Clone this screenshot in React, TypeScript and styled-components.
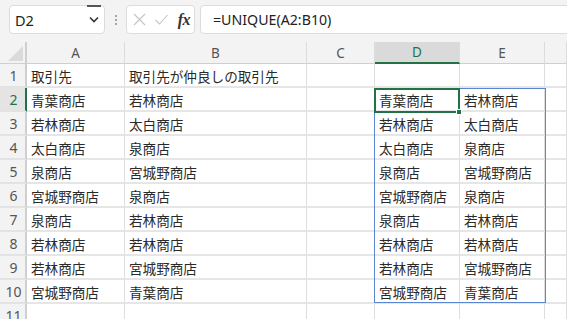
import React from "react";
import styled, { createGlobalStyle, css } from "styled-components";

const Global = createGlobalStyle`
  html, body { margin: 0; padding: 0; background: #f3f3f3; overflow: hidden; }
  body { width: 567px; height: 319px; }
  * { box-sizing: border-box; }
`;

const Page = styled.div`
  display: flex;
  flex-direction: column;
  width: 567px;
  height: 319px;
  overflow: hidden;
  background: #f3f3f3;
`;

const Toolbar = styled.div`
  display: flex;
  align-items: stretch;
  height: 42px;
  flex: none;
  padding: 5px 0 8px 9px;
`;

const Box = styled.div`
  background: #ffffff;
  border: 1px solid #dcdcdc;
  border-radius: 4px;
  display: flex;
  align-items: center;
`;

const NameBox = styled(Box)`
  position: relative;
  width: 96px;
  padding-left: 5px;
  font-family: "Noto Sans", "Liberation Sans", sans-serif;
  font-size: 14.5px;
  color: #222;
  &::after {
    content: "";
    position: absolute;
    top: -1px;
    right: 3px;
    width: 14px;
    height: 1.5px;
    background: #555;
  }
`;

const NameText = styled.span`
  flex: 1;
  padding-top: 1px;
`;

const Chevron = styled.svg`
  width: 10px;
  height: 7px;
  margin-right: 5px;
`;

const Dots = styled.div`
  width: 21px;
  display: flex;
  flex-direction: column;
  align-items: center;
  justify-content: center;
  gap: 2px;
`;

const Dot = styled.span`
  width: 2px;
  height: 2px;
  background: #8a8a8a;
  border-radius: 1px;
`;

const FxButtons = styled(Box)`
  width: 69px;
  padding: 0 4px 0 6px;
  justify-content: space-between;
`;

const IconSvg = styled.svg`
  width: 13px;
  height: 13px;
`;

const FxLabel = styled.span`
  font-family: "Liberation Serif", serif;
  font-style: italic;
  font-weight: bold;
  font-size: 16px;
  color: #333;
  letter-spacing: -0.5px;
`;

const FormulaInput = styled(Box)`
  flex: 1;
  margin-left: 5px;
  margin-right: -8px;
  padding-left: 12px;
  font-family: "Noto Sans", "Liberation Sans", sans-serif;
  font-size: 14.2px;
  color: #222;
`;

const Sheet = styled.div`
  flex: 1;
  display: grid;
  overflow: hidden;
  background: #ffffff;
`;

const gridTemplate = css`
  display: grid;
  grid-area: 1 / 1;
  grid-template-columns: 27px 98px 182px 68px 85px 85px 1fr;
  grid-template-rows: 22px repeat(11, 24px);
`;

const Grid = styled.div`
  ${gridTemplate}
`;

const Overlay = styled.div`
  ${gridTemplate}
  pointer-events: none;
  z-index: 1;
`;

const Corner = styled.div`
  background: #f3f3f3;
  border-right: 2px solid #cfcfcf;
  border-bottom: 1px solid #cfcfcf;
  display: flex;
  align-items: flex-end;
  justify-content: flex-end;
  padding: 0 2px 2px 0;
`;

const Triangle = styled.div`
  width: 0;
  height: 0;
  border-left: 15px solid transparent;
  border-bottom: 15px solid #dadada;
`;

const ColHeader = styled.div<{ $active?: boolean }>`
  background: #f3f3f3;
  border-right: 1px solid #dcdcdc;
  border-bottom: 1px solid #cfcfcf;
  display: flex;
  align-items: center;
  justify-content: center;
  font-family: "Noto Sans", "Liberation Sans", sans-serif;
  font-size: 13.5px;
  color: #555;
  ${(p) =>
    p.$active &&
    css`
      background: #dadada;
      color: #217346;
      border-bottom: 2px solid #217346;
    `}
`;

const RowHeader = styled.div<{ $active?: boolean }>`
  background: #f3f3f3;
  border-right: 2px solid #cfcfcf;
  border-bottom: 2px solid #e3e3e3;
  display: flex;
  align-items: center;
  justify-content: center;
  padding-left: 2px;
  font-family: "Noto Sans", "Liberation Sans", sans-serif;
  font-size: 14px;
  color: #555;
  ${(p) =>
    p.$active &&
    css`
      background: #e4e4e4;
      color: #217346;
      border-right: 2px solid #217346;
    `}
`;

const Cell = styled.div`
  border-right: 1px solid #dedede;
  border-bottom: 2px solid #e6e6e6;
  display: flex;
  align-items: center;
  padding: 1px 0 0 4px;
  font-family: "Noto Sans CJK JP", "Noto Sans", sans-serif;
  font-size: 13.6px;
  color: #2a2a2a;
  white-space: nowrap;
  overflow: hidden;
`;

const SpillBorder = styled.div`
  grid-column: 5 / 7;
  grid-row: 3 / 12;
  border: 1.5px solid #5b86d4;
  margin: 0 -1px 1px -1px;
`;

const Selection = styled.div`
  grid-column: 5 / 6;
  grid-row: 3 / 4;
  border: 2px solid #217346;
  margin: 0 0 -1px -1px;
  position: relative;
`;

const FillHandle = styled.span`
  position: absolute;
  right: -4px;
  bottom: -4px;
  width: 6px;
  height: 6px;
  background: #217346;
  border: 1px solid #ffffff;
`;

const columns = ["A", "B", "C", "D", "E", ""];

const rows: string[][] = [
  ["取引先", "取引先が仲良しの取引先", "", "", ""],
  ["青葉商店", "若林商店", "", "青葉商店", "若林商店"],
  ["若林商店", "太白商店", "", "若林商店", "太白商店"],
  ["太白商店", "泉商店", "", "太白商店", "泉商店"],
  ["泉商店", "宮城野商店", "", "泉商店", "宮城野商店"],
  ["宮城野商店", "泉商店", "", "宮城野商店", "泉商店"],
  ["泉商店", "若林商店", "", "泉商店", "若林商店"],
  ["若林商店", "若林商店", "", "若林商店", "若林商店"],
  ["若林商店", "宮城野商店", "", "若林商店", "宮城野商店"],
  ["宮城野商店", "青葉商店", "", "宮城野商店", "青葉商店"],
  ["", "", "", "", ""],
];

export default function App() {
  return (
    <Page>
      <Global />
      <Toolbar>
        <NameBox>
          <NameText>D2</NameText>
          <Chevron viewBox="0 0 10 7">
            <path d="M1 1.5 L5 5.5 L9 1.5" fill="none" stroke="#333" strokeWidth="1.6" />
          </Chevron>
        </NameBox>
        <Dots>
          <Dot />
          <Dot />
          <Dot />
        </Dots>
        <FxButtons>
          <IconSvg viewBox="0 0 13 13">
            <path d="M1 1 L12 12 M12 1 L1 12" stroke="#c4c4c4" strokeWidth="1.1" fill="none" />
          </IconSvg>
          <IconSvg viewBox="0 0 13 13">
            <path d="M0.5 7 L4.5 11 L12.5 2" stroke="#c4c4c4" strokeWidth="1.1" fill="none" />
          </IconSvg>
          <FxLabel>fx</FxLabel>
        </FxButtons>
        <FormulaInput>=UNIQUE(A2:B10)</FormulaInput>
      </Toolbar>
      <Sheet>
        <Grid>
          <Corner>
            <Triangle />
          </Corner>
          {columns.map((c, i) => (
            <ColHeader key={i} $active={c === "D"}>
              {c}
            </ColHeader>
          ))}
          {rows.map((r, ri) => (
            <React.Fragment key={ri}>
              <RowHeader $active={ri === 1}>{ri + 1}</RowHeader>
              {r.map((v, ci) => (
                <Cell key={ci}>{v}</Cell>
              ))}
              <Cell />
            </React.Fragment>
          ))}
        </Grid>
        <Overlay>
          <SpillBorder />
          <Selection>
            <FillHandle />
          </Selection>
        </Overlay>
      </Sheet>
    </Page>
  );
}
